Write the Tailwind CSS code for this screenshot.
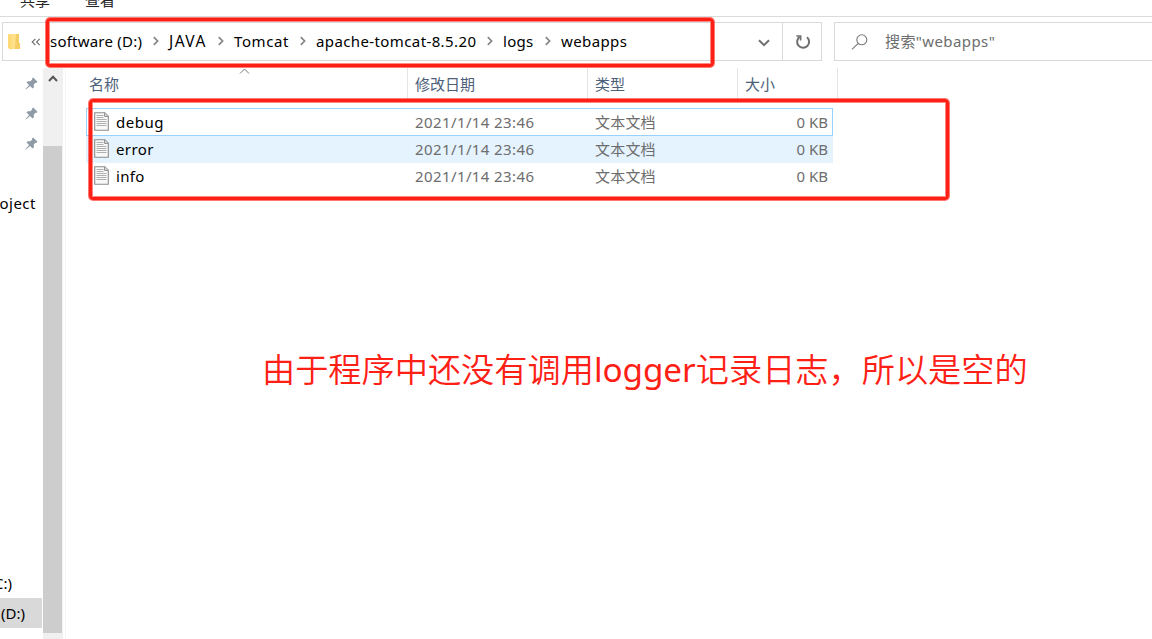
<!DOCTYPE html>
<html lang="zh-CN">
<head>
<meta charset="utf-8">
<title>webapps</title>
<script src="https://cdn.jsdelivr.net/npm/@tailwindcss/browser@4"></script>
</head>
<body class="relative flex h-[639px] w-[1152px] flex-col overflow-hidden bg-white font-['Noto_Sans','Noto_Sans_CJK_SC',sans-serif] text-[15px] leading-[20px] text-black">
<svg class="hidden">
  <symbol id="chev" viewBox="0 0 8 10"><path d="M1.8 1.2 5.6 5 1.8 8.8" fill="none" stroke="#858585" stroke-width="1.7"/></symbol>
  <symbol id="pin" viewBox="0 0 14 14"><path d="M8.8.6 13.4 5.2 12.3 6.5 11.3 6.3 9.4 8.2 9.6 11 8.2 12.4 5.4 9.6 1 13.4.6 13 4.4 8.6 1.6 5.8 3 4.5 5.8 4.7 7.7 2.7 7.5 1.8Z" fill="#8e9aa5"/></symbol>
  <symbol id="doc" viewBox="0 0 15 19"><path d="M.7.7h10.1l3.5 3.5v14.1H.7Z" fill="#f8f8f8" stroke="#8c8c8c" stroke-width="1.1"/><path d="M10.6.8v3.6h3.6" fill="#ddd" stroke="#8c8c8c" stroke-width="1"/><path d="M2.5 3.5h7M2.5 5.5h7M2.5 7.5h10M2.5 9.5h10M2.5 11.5h10M2.5 13.5h10" stroke="#b0b0b0" stroke-width="1"/></symbol>
</svg>

<header class="flex h-[17px] shrink-0 items-end gap-[35px] overflow-hidden border-b border-[#dadbdc] pb-[6px] pl-5 text-[#262626]">
  <span>共享</span><span>查看</span>
</header>

<div class="mt-[5px] flex h-[39px] shrink-0 gap-[12px] pl-[2px]">
  <div class="flex w-[820px] border border-[#d9d9d9]">
    <div class="flex w-[47px] items-center pl-[4px]">
      <svg class="h-[18px] w-[14px]" viewBox="0 0 14 18"><path d="M1 1h9v15H4Z" fill="#ffe08a"/><path d="M9 1h3v9h1v6H8Z" fill="#f5cd63"/><path d="M1 1l3.5 2v14L1 15Z" fill="#ffd978"/></svg>
      <svg class="ml-[10px] h-[8px] w-[10px]" viewBox="0 0 10 8"><path d="M4.4.8 1.2 4l3.2 3.2M8.7.8 5.5 4l3.2 3.2" fill="none" stroke="#6d6d6d" stroke-width="1.1"/></svg>
    </div>
    <nav class="flex flex-1 items-center whitespace-nowrap pb-[2px]">
      <span class="flex w-[118px] items-center justify-between pr-[8px]"><span class="tracking-[0.22px]">software (D:)</span><svg class="h-[10px] w-[8px]"><use href="#chev"/></svg></span>
      <span class="flex w-[66px] items-center justify-between pl-[1px] pr-[9px]"><span class="text-[15.5px] tracking-[1.4px]">JAVA</span><svg class="h-[10px] w-[8px]"><use href="#chev"/></svg></span>
      <span class="flex w-[82px] items-center justify-between pr-[9px]"><span class="tracking-[0.6px]">Tomcat</span><svg class="h-[10px] w-[8px]"><use href="#chev"/></svg></span>
      <span class="flex w-[187px] items-center justify-between pr-[9px]"><span class="tracking-[0.39px]">apache-tomcat-8.5.20</span><svg class="h-[10px] w-[8px]"><use href="#chev"/></svg></span>
      <span class="flex w-[58px] items-center justify-between pr-[9px]"><span class="tracking-[0.3px]">logs</span><svg class="h-[10px] w-[8px]"><use href="#chev"/></svg></span>
      <span class="tracking-[0.4px]">webapps</span>
    </nav>
    <div class="flex w-[38px] items-center justify-center pl-[2px]"><svg class="mt-[3px] h-[8px] w-[12px]" viewBox="0 0 12 8"><path d="M1 1.2 6 6.2 11 1.2" fill="none" stroke="#707070" stroke-width="2"/></svg></div>
    <div class="flex w-[39px] items-center justify-center border-l border-[#d9d9d9] pl-[2px]"><svg class="h-[16px] w-[16px]" viewBox="0 0 16 16"><path d="M12 3.2A6 6 0 1 1 4.6 2.9" fill="none" stroke="#707070" stroke-width="2"/><path d="M1.4 2H5.6V6.4" fill="none" stroke="#707070" stroke-width="1.7"/></svg></div>
  </div>
  <div class="flex flex-1 items-center border-y border-l border-[#d9d9d9] pl-[16px] text-[#6d6d6d]">
    <svg class="h-[16px] w-[17px]" viewBox="0 0 17 16"><circle cx="10.8" cy="5.8" r="5" fill="none" stroke="#7a7a7a" stroke-width="1.1"/><path d="M7.2 9.3 1 15.4" stroke="#7a7a7a" stroke-width="1.1"/></svg>
    <span class="ml-[17px] pb-[2px] tracking-[0.4px]">搜索"webapps"</span>
  </div>
</div>

<main class="mt-[7px] flex min-h-0 flex-1">
  <aside class="flex w-[43px] shrink-0 flex-col overflow-hidden whitespace-nowrap">
    <div class="flex h-[90px] flex-col gap-[17px] pl-[25px] pt-[9px]">
      <svg class="h-[13px] w-[13px] shrink-0"><use href="#pin"/></svg>
      <svg class="h-[13px] w-[13px] shrink-0"><use href="#pin"/></svg>
      <svg class="h-[13px] w-[13px] shrink-0"><use href="#pin"/></svg>
    </div>
    <div class="mt-[30px] flex h-[30px] w-[36px] items-center justify-end tracking-[0.5px]">oject</div>
    <div class="mt-[350px] flex h-[30px] w-[12px] items-center justify-end">C:)</div>
    <div class="flex h-[30px] w-[42px] items-center bg-[#d9d9d9] pb-[1px]"><span class="flex w-[25px] justify-end">(D:)</span></div>
  </aside>
  <div class="flex w-[20px] shrink-0 flex-col bg-[#f0f0f0]">
    <svg class="ml-[5px] mt-[7px] h-[7px] w-[10px]" viewBox="0 0 10 7"><path d="M1 6 5 1.8 9 6" fill="none" stroke="#555" stroke-width="2"/></svg>
    <div class="mt-[64px] h-[487px] w-[19px] bg-[#cdcdcd]"></div>
  </div>
  <section class="ml-[2px] flex-1 border-l border-[#f5f5f5]">
    <div class="flex h-[32px] text-[#4c607a]">
      <div class="relative flex w-[342px] items-center border-r border-[#e5e5e5] pl-[23px]">名称
        <svg class="absolute left-[173px] top-0 h-[6px] w-[11px]" viewBox="0 0 11 6"><path d="M1 5.5 5.5 1 10 5.5" fill="none" stroke="#777" stroke-width="1"/></svg></div>
      <div class="flex w-[180px] items-center border-r border-[#e5e5e5] pl-[7px]">修改日期</div>
      <div class="flex w-[150px] items-center border-r border-[#e5e5e5] pl-[7px]">类型</div>
      <div class="flex w-[100px] items-center border-r border-[#e5e5e5] pl-[7px]">大小</div>
    </div>
    <div class="ml-[20px] mt-[8px] w-[747px] text-[#6d6d6d]">
      <div class="flex h-[28px] items-center border border-[#99d1ff] pb-[1px] pl-[7px] pr-[4px]"><svg class="h-[19px] w-[15px]"><use href="#doc"/></svg><span class="ml-[7px] w-[299px] tracking-[0.5px] text-black">debug</span><span class="w-[180px] tracking-[0.4px]">2021/1/14 23:46</span><span class="flex-1 tracking-[0.2px]">文本文档</span><span>0 KB</span></div>
      <div class="flex h-[27px] items-center bg-[#e5f3ff] pb-[2px] pl-[8px] pr-[5px]"><svg class="h-[19px] w-[15px]"><use href="#doc"/></svg><span class="ml-[7px] w-[299px] tracking-[0.4px] text-black">error</span><span class="w-[180px] tracking-[0.4px]">2021/1/14 23:46</span><span class="flex-1 tracking-[0.2px]">文本文档</span><span>0 KB</span></div>
      <div class="flex h-[27px] items-center pb-[2px] pl-[8px] pr-[5px]"><svg class="h-[19px] w-[15px]"><use href="#doc"/></svg><span class="ml-[7px] w-[299px] tracking-[0.3px] text-black">info</span><span class="w-[180px] tracking-[0.4px]">2021/1/14 23:46</span><span class="flex-1 tracking-[0.2px]">文本文档</span><span>0 KB</span></div>
    </div>
  </section>
</main>

<div class="absolute left-[46px] top-[18px] h-[49px] w-[668px] rounded-[4px] border-3 border-[#ff2015] shadow-[0_0_0_1px_#ff201599,inset_0_0_0_1px_#ff201588]"></div>
<div class="absolute left-[89px] top-[99px] h-[101px] w-[860px] rounded-[4px] border-3 border-[#ff2015] shadow-[0_0_0_1px_#ff201599,inset_0_0_0_1px_#ff201588]"></div>
<p class="absolute left-[262px] top-[346px] whitespace-nowrap text-[33.2px] font-[350] leading-[48px] text-[#ff2015]">由于程序中还没有调用<span class="font-normal">logger</span>记录日志，所以是空的</p>
</body>
</html>
